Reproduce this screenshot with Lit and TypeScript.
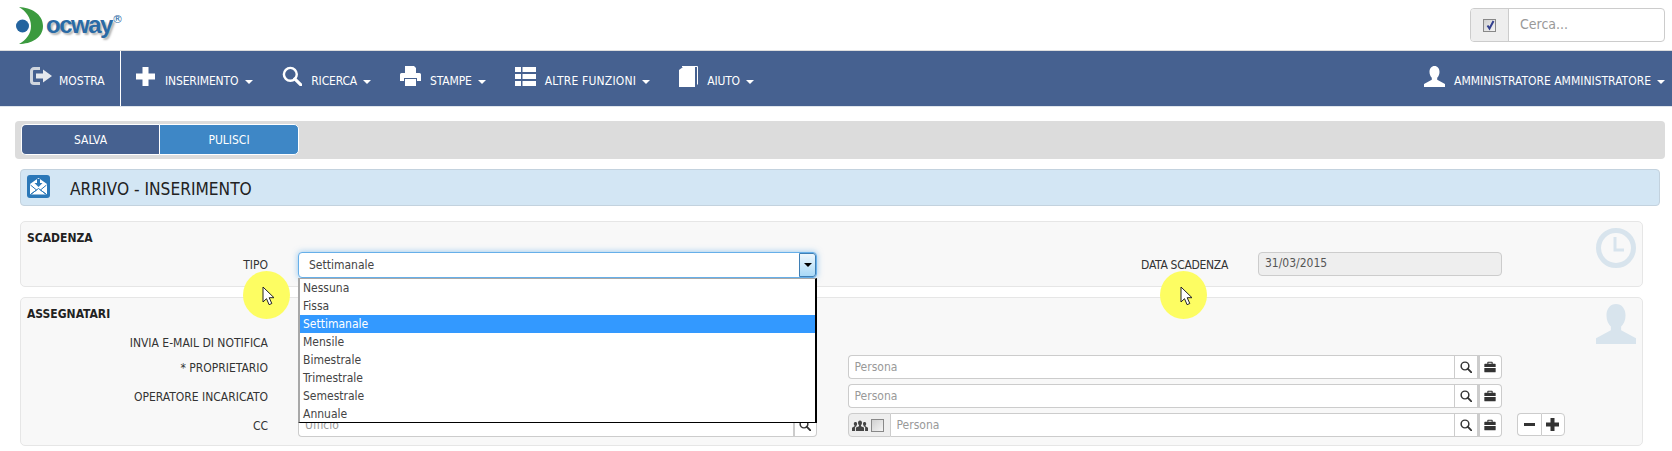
import { LitElement, html, css, svg } from "lit";
import { customElement } from "lit/decorators.js";

const ico = {
  search: svg`<circle cx="7.5" cy="7.5" r="5.8" fill="none" stroke="currentColor" stroke-width="2.2"/><path d="M11.5 11.5L17 17" stroke="currentColor" stroke-width="2.8" stroke-linecap="round"/>`,
  brief: svg`<path fill="currentColor" d="M6 1h6a1 1 0 0 1 1 1v2h3.5a1 1 0 0 1 1 1v4H.5V5a1 1 0 0 1 1-1H5V2a1 1 0 0 1 1-1zm.6 1.6V4h4.8V2.6zM.5 10.6h17V16a1 1 0 0 1-1 1h-15a1 1 0 0 1-1-1z"/>`,
};

@customElement("app-root")
export class AppRoot extends LitElement {
  static styles = css`
    :host { display: block; width: 1672px; height: 451px; overflow: hidden; position: relative; background: #fff;
      font-family: "DejaVu Sans Condensed", "DejaVu Sans", sans-serif; font-stretch: condensed; font-size: 12px; color: #333; }
    * { box-sizing: border-box; }
    .top { height: 51px; display: flex; justify-content: space-between; position: relative; border-bottom: 1px solid #ddd; }
    .logo { position: relative; width: 130px; }
    .logo svg { position: absolute; left: 15px; top: 6px; }
    .logo-text { position: absolute; left: 46px; top: 10px; font: bold 24px/30px "Liberation Sans", sans-serif; letter-spacing: -1.5px; color: #2a6aa5; text-shadow: 2px 2px 2px #b5b5b5; }
    .reg { position: absolute; left: 112px; top: 13px; font: 11px/14px "DejaVu Sans", sans-serif; color: #2a6aa5; }
    .search { margin: 8px 7px 0 0; width: 195px; height: 34px; display: flex; border: 1px solid #ccc; border-radius: 4px; }
    .search .addon { width: 38px; background: #eee; border-right: 1px solid #ccc; display: flex; align-items: center; justify-content: center; border-radius: 3px 0 0 3px; }
    .search .ph { padding-left: 11px; font-size: 14px; line-height: 30px; color: #999; }
    .cb { width: 13px; height: 13px; border: 1px solid #888; background: linear-gradient(135deg, #d0d0d0, #f4f4f4); display: block; position: relative; }
    .cb svg { position: absolute; left: 1px; top: 0; }
    nav { height: 57px; margin-top: -1px; background: #466190; border-bottom: 1px solid #dfe5ec; display: flex; color: #fff; font-size: 12px; }
    .first { width: 121px; border-right: 1px solid #fff; padding-left: 30px; display: flex; align-items: center; gap: 7px; }
    .items { display: flex; gap: 29px; padding-left: 15px; }
    .item { display: flex; align-items: center; gap: 9px; }
    .items .lbl { letter-spacing: -0.15px; }
    .items .lbl.wide { letter-spacing: 0.2px; }
    .items .plus { gap: 10px; }
    .item svg { display: block; margin-top: -4px; }
    .first svg { display: block; margin-top: -4px; }
    .lbl { margin-top: 6px; white-space: nowrap; }
    .caret { width: 0; height: 0; border: 4px solid transparent; border-top-color: #fff; border-bottom: 0; margin: 7px 0 0 -3px; }
    .user { margin-left: auto; padding-right: 7px; gap: 9px; }
    .toolbar { margin: 14px 7px 0 15px; height: 38px; background: #dcdcdc; border-radius: 4px; padding: 3px 6px; display: flex; }
    .btn { height: 31px; color: #fff; display: flex; align-items: center; justify-content: center; border: 1px solid #fff; font-size: 12px; }
    .salva { width: 138px; background: #466190; border-radius: 5px 0 0 5px; border-right: 0; }
    .pulisci { width: 140px; background: #3e87c6; border-radius: 0 5px 5px 0; }
    .title { margin: 10px 12px 0 20px; height: 37px; background: #d3e6f4; border: 1px solid #c3d2de; border-radius: 4px; display: flex; align-items: center; padding-left: 6px; gap: 20px; font-size: 17.2px; color: #222; }
    .title svg { display: block; margin-top: -3px; }
    .title span { margin-top: 3px; }
    .panel { position: relative; margin: 0 29px 0 20px; background: #f8f8f8; border: 1px solid #e6e6e6; border-radius: 5px; }
    .p1 { margin-top: 15px; height: 66px; padding: 8px 0 0 6px; }
    .p2 { margin-top: 10px; height: 149px; padding: 8px 0 0 6px; }
    h3 { margin: 0; font-size: 12px; line-height: 16px; font-weight: bold; color: #222; }
    .row1 { display: grid; grid-template-columns: 241px 548px 412px 274px; margin-top: 6px; align-items: start; }
    .l { text-align: right; white-space: nowrap; line-height: 26px; color: #333; }
    .tight { letter-spacing: -0.3px; }
    .select { margin-left: 30px; width: 519px; height: 26px; background: #fff; border: 1px solid #66afe9; border-radius: 4px; box-shadow: 0 0 6px rgba(102,175,233,.7); display: flex; justify-content: space-between; line-height: 24px; padding-left: 10px; color: #444; }
    .arrow { width: 17px; height: 24px; background: linear-gradient(#eef7fd, #a9d9f7); border: 1px solid #3f7fb5; border-radius: 0 3px 3px 0; display: flex; align-items: center; justify-content: center; }
    .arrow i { width: 0; height: 0; border: 4px solid transparent; border-top-color: #000; border-bottom: 0; }
    .disabled { height: 24px; background: #eee; border: 1px solid #ccc; border-radius: 4px; line-height: 21px; padding-left: 6px; color: #555; margin-left: 30px; width: 244px; }
    .rows { display: flex; flex-direction: column; gap: 5px; margin-top: 1px; }
    .r { display: grid; grid-template-columns: 241px 548px 1fr; height: 24px; align-items: start; }
    .r.head { margin-top: 8px; height: 24px; }
    .g { display: flex; height: 24px; }
    .ig { margin-left: 30px; width: 519px; }
    .pg { margin-left: 31.5px; width: 654.5px; }
    input { flex: 1; min-width: 0; height: 24px; border: 1px solid #ccc; border-right: 0; border-radius: 4px 0 0 4px; padding: 0 6px; font: inherit; outline: none; background: #fff; }
    input::placeholder { color: #999; opacity: 1; }
    .sq { width: 24px; height: 24px; background: #fff; border: 1px solid #ccc; display: flex; align-items: center; justify-content: center; color: #333; padding-right: 1px; }
    .sq.end { border-radius: 0 4px 4px 0; border-left-width: 2px; }
    .grp { width: 43px; height: 24px; background: #eee; border: 1px solid #ccc; border-radius: 4px 0 0 4px; display: flex; align-items: center; gap: 3px; padding-left: 3px; flex: none; }
    .grp + input { border-radius: 0; border-left: 0; }
    .pm { display: flex; margin-left: 15px; height: 23px; }
    .pm .sq { height: 23px; }
    .pm .a { border-radius: 4px 0 0 4px; border-right: 0; }
    .pm .b { border-radius: 0 4px 4px 0; }
    .wm { position: absolute; right: 6px; top: 6px; }
    .dd { position: absolute; left: 298px; top: 278px; width: 519px; height: 145px; background: #fff; border-left: 2px solid #a8a8a8; border-top: 1px solid #a8a8a8; border-right: 2px solid #000; border-bottom: 1px solid #000; }
    .dd div { height: 18px; line-height: 18px; padding-left: 3px; color: #444; }
    .dd .sel { background: #3399ff; color: #fff; }
    .hl { position: absolute; top: 271px; width: 47px; height: 48px; border-radius: 50%; background: #fdfd62; }
    .cur { position: absolute; top: 286px; display: block; }
  `;

  private person(first = false) {
    return html`<div class="g pg">
      ${first ? html`<div class="grp">
        <svg width="16" height="13" viewBox="0 0 16 13"><path fill="#444" d="M8 1.500c1.300 0 2 1 2 2.400 0 1-.4 1.800-1 2.300v1L12 8.500V12H4V8.500l3-1.300v-1c-.6-.5-1-1.300-1-2.300C6 2.500 6.700 1.500 8 1.500zM3.500 3c1 0 1.500.7 1.600 1.700 0 .8-.2 1.400-.6 1.800v.8l-1.400.8V12H0V8.700l2.500-1.400v-.8C2 6 1.800 5.400 1.800 4.700 1.800 3.700 2.500 3 3.500 3zm9 0c1 0 1.700.7 1.700 1.700 0 .7-.2 1.300-.7 1.800v.8L16 8.700V12h-2.900V8.100l-1.500-.8v-.8c-.4-.4-.6-1-.6-1.800C11 3.700 11.500 3 12.500 3z"/></svg>
        <span class="cb"></span></div>` : ""}
      <input placeholder="Persona" readonly />
      <div class="sq"><svg width="12" height="12" viewBox="0 0 18 18">${ico.search}</svg></div>
      <div class="sq end"><svg width="12" height="12" viewBox="0 0 18 18">${ico.brief}</svg></div>
    </div>`;
  }

  private office(ph = "Ufficio") {
    return html`<div class="g ig"><input placeholder=${ph} readonly /><div class="sq end"><svg width="12" height="12" viewBox="0 0 18 18">${ico.search}</svg></div></div>`;
  }

  private cursor(x: number) {
    return html`<svg class="cur" style="left:${x}px" width="13" height="20" viewBox="0 0 13 20"><path d="M1 1v15l3.500-3.300 2.600 6 2.700-1.200-2.600-5.800H12z" fill="#fff" stroke="#222" stroke-width="1"/></svg>`;
  }

  render() {
    return html`
      <div class="top">
        <div class="logo">
          <svg width="34" height="40" viewBox="0 0 34 40">
            <circle cx="7.500" cy="20" r="6.500" fill="#24649f"/>
            <path fill="#3b9a3e" d="M4 1c12 .5 24 7 24 19S16 38 4 38c7-4 12-10 12-18S11 5 4 1z"/>
          </svg>
          <div class="logo-text">ocway</div>
          <div class="reg">®</div>
        </div>
        <div class="search">
          <div class="addon"><span class="cb"><svg width="11" height="11" viewBox="0 0 11 11"><path d="M2.500 5.500l2 3L8.500 1" fill="none" stroke="#33408f" stroke-width="2"/></svg></span></div>
          <div class="ph">Cerca...</div>
        </div>
      </div>
      <nav>
        <div class="first">
          <svg width="22" height="18" viewBox="0 0 22 18"><path fill="none" stroke="#cfd5de" stroke-width="3" d="M10 1.500H4A2.500 2.500 0 0 0 1.500 4v10A2.500 2.500 0 0 0 4 16.500h6"/><path fill="#e6e9ee" d="M6 6.500h7V2.500l9 6.500-9 6.500v-4H6z"/></svg>
          <span class="lbl">MOSTRA</span>
        </div>
        <div class="items">
          <div class="item plus"><svg width="19" height="19" viewBox="0 0 19 19"><path fill="#fff" d="M6.500 0h6v6.500H19v6h-6.500V19h-6v-6.500H0v-6h6.500z"/></svg><span class="lbl">INSERIMENTO</span><i class="caret"></i></div>
          <div class="item"><svg style="color:#fff" width="20" height="20" viewBox="0 0 18 18">${ico.search}</svg><span class="lbl">RICERCA</span><i class="caret"></i></div>
          <div class="item"><svg width="21" height="20" viewBox="0 0 21 20"><path fill="#fff" d="M5 0h9l2 2v5H5zM0 8.500A1.500 1.500 0 0 1 1.500 7h18A1.500 1.500 0 0 1 21 8.500V15h-4v-3H4v3H0zM5 13h11v7H5z"/></svg><span class="lbl">STAMPE</span><i class="caret"></i></div>
          <div class="item"><svg width="21" height="19" viewBox="0 0 21 19"><path fill="#fff" d="M0 0h6v5H0zM7.500 0H21v5H7.500zM0 7h6v5H0zM7.500 7H21v5H7.500zM0 14h6v5H0zM7.500 14H21v5H7.500z"/></svg><span class="lbl wide">ALTRE FUNZIONI</span><i class="caret"></i></div>
          <div class="item"><svg width="19" height="21" viewBox="0 0 19 21"><path fill="#fff" d="M0 4l4-3h12v20H0z"/><path fill="none" stroke="#fff" d="M3 .5h15.500v18"/></svg><span class="lbl">AIUTO</span><i class="caret"></i></div>
        </div>
        <div class="item user"><svg width="21" height="21" viewBox="0 0 21 21"><path fill="#fff" d="M10.500 0c3 0 5 2.500 5 6 0 2.500-1 4.500-2.300 5.800v2L21 18v3H0v-3l7.800-4.200v-2C6.500 10.500 5.500 8.500 5.500 6c0-3.500 2-6 5-6z"/></svg><span class="lbl">AMMINISTRATORE AMMINISTRATORE</span><i class="caret"></i></div>
      </nav>
      <div class="toolbar"><div class="btn salva">SALVA</div><div class="btn pulisci">PULISCI</div></div>
      <div class="title">
        <svg width="23" height="23" viewBox="0 0 23 23"><rect width="23" height="23" rx="3" fill="#2b78b8"/><path fill="#fff" d="M3 9l8.500-6L20 9v10.500H3z"/><path fill="none" stroke="#2b78b8" d="M3.500 10l6 5-6 4.500M19.500 10l-6 5 6 4.500M3.500 19.500l8-6 8 6"/><path fill="#2b78b8" d="M10 4h3v4h2.500l-4 4-4-4H10z"/></svg>
        <span>ARRIVO - INSERIMENTO</span>
      </div>
      <section class="panel p1">
        <h3>SCADENZA</h3>
        <div class="row1">
          <div class="l">TIPO</div>
          <div class="select"><span>Settimanale</span><div class="arrow"><i></i></div></div>
          <div class="l tight">DATA SCADENZA</div>
          <div class="disabled">31/03/2015</div>
        </div>
        <svg class="wm" width="40" height="40" viewBox="0 0 40 40"><circle cx="20" cy="20" r="17.500" fill="none" stroke="#d8e4ed" stroke-width="5"/><path d="M19 9v13h9" fill="none" stroke="#d8e4ed" stroke-width="3"/></svg>
      </section>
      <section class="panel p2">
        <h3>ASSEGNATARI</h3>
        <div class="r head"><div class="l">INVIA E-MAIL DI NOTIFICA</div></div>
        <div class="rows">
          <div class="r"><div class="l">* PROPRIETARIO</div>${this.office()}${this.person()}</div>
          <div class="r"><div class="l">OPERATORE INCARICATO</div>${this.office()}${this.person()}</div>
          <div class="r"><div class="l">CC</div>${this.office()}
            <div style="display:flex">${this.person(true)}
              <div class="pm"><div class="sq a"><svg width="11" height="11" viewBox="0 0 11 11"><path fill="#333" d="M0 4h11v3H0z"/></svg></div><div class="sq b"><svg width="13" height="13" viewBox="0 0 13 13"><path fill="#333" d="M4.500 0h4v4.500H13v4H8.500V13h-4V8.500H0v-4h4.500z"/></svg></div></div>
            </div>
          </div>
        </div>
        <svg class="wm" width="40" height="40" viewBox="0 0 21 21"><path fill="#d8e4ed" d="M10.500 0c3 0 5 2.500 5 6 0 2.500-1 4.500-2.300 5.800v2L21 18v3H0v-3l7.800-4.200v-2C6.500 10.500 5.500 8.500 5.500 6c0-3.500 2-6 5-6z"/></svg>
      </section>
      <div class="dd">
        <div>Nessuna</div><div>Fissa</div><div class="sel">Settimanale</div><div>Mensile</div><div>Bimestrale</div><div>Trimestrale</div><div>Semestrale</div><div>Annuale</div>
      </div>
      <div class="hl" style="left:243px"></div>
      <div class="hl" style="left:1160px"></div>
      ${this.cursor(262)}${this.cursor(1180)}
    `;
  }
}
